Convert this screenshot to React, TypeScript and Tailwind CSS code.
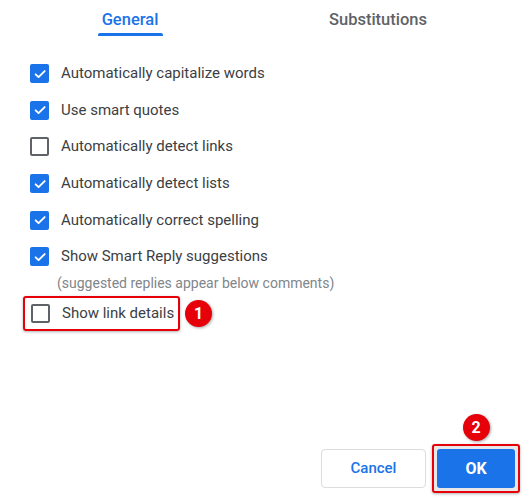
import React from 'react';

const OPTIONS = [
  { label: 'Automatically capitalize words', checked: true },
  { label: 'Use smart quotes', checked: true },
  { label: 'Automatically detect links', checked: false },
  { label: 'Automatically detect lists', checked: true },
  { label: 'Automatically correct spelling', checked: true },
  { label: 'Show Smart Reply suggestions', checked: true },
];

const Checkbox = ({ checked }: { checked: boolean }) =>
  checked ? (
    <div className="w-[19px] h-[19px] rounded-[2px] bg-[#1a73e8] flex items-center justify-center shrink-0">
      <svg width="14" height="14" viewBox="0 0 24 24">
        <path d="M4.5 12.5l5 5L20 7" fill="none" stroke="white" strokeWidth="3.2" strokeLinecap="round" strokeLinejoin="round" />
      </svg>
    </div>
  ) : (
    <div className="w-[19px] h-[19px] rounded-[2px] border-2 border-[#5f6368] bg-white shrink-0" />
  );

const Badge = ({ n }: { n: number }) => (
  <div className="w-[27px] h-[27px] rounded-full bg-[#e5000a] text-white text-[16px] font-bold flex items-center justify-center shadow-[1px_1px_3px_rgba(0,0,0,0.35)]">
    {n}
  </div>
);

export default function App() {
  return (
    <div className="w-[529px] h-[500px] bg-white font-['Roboto',sans-serif] text-[#3c4043] relative overflow-hidden">
      {/* Tabs */}
      <div className="flex pl-[6px] pt-[9px]">
        <div className="w-[248px] flex justify-center">
          <div className="flex flex-col items-center">
            <span className="text-[16.5px] font-medium text-[#1a73e8] leading-[22px] px-[4px]">General</span>
            <div className="w-[65px] h-[3px] bg-[#1a73e8] rounded-t-[2px] mt-[2px]" />
          </div>
        </div>
        <div className="w-[248px] flex justify-center">
          <span className="text-[16.5px] font-medium text-[#5f6368] leading-[22px]">Substitutions</span>
        </div>
      </div>

      {/* Options */}
      <div className="pl-[30px] pt-[19.5px]">
        {OPTIONS.map((o) => (
          <div key={o.label} className="h-[36.6px] flex items-center gap-[12px]">
            <Checkbox checked={o.checked} />
            <span className="text-[15px] leading-none">{o.label}</span>
          </div>
        ))}
        <div className="pl-[27px] text-[14px] text-[#80868b] leading-[20px] -mt-[2px]">
          (suggested replies appear below comments)
        </div>
        <div className="flex items-center gap-[5px] -ml-[7px] mt-[3px]">
          <div className="flex items-center gap-[12px] border-2 border-[#e5000a] rounded-[3px] h-[35px] pl-[6px] pr-[4px] shadow-[0_1px_3px_rgba(0,0,0,0.3)]">
            <Checkbox checked={false} />
            <span className="text-[15px] leading-none">Show link details</span>
          </div>
          <Badge n={1} />
        </div>
      </div>

      {/* Footer */}
      <div className="absolute right-[9px] bottom-[7px] flex items-end gap-[6px]">
        <button className="w-[105px] h-[39px] mb-[5px] rounded-[4px] border border-[#dadce0] bg-white text-[#1a73e8] text-[15px] font-medium">
          Cancel
        </button>
        <div className="flex flex-col items-center gap-[3px]">
          <Badge n={2} />
          <div className="border-2 border-[#e5000a] rounded-[3px] p-[3px] bg-[#e8e8e8] shadow-[0_1px_3px_rgba(0,0,0,0.3)]">
            <button className="w-[78px] h-[39px] rounded-[3px] bg-[#1a73e8] text-white text-[16px] font-bold">
              OK
            </button>
          </div>
        </div>
      </div>
    </div>
  );
}
